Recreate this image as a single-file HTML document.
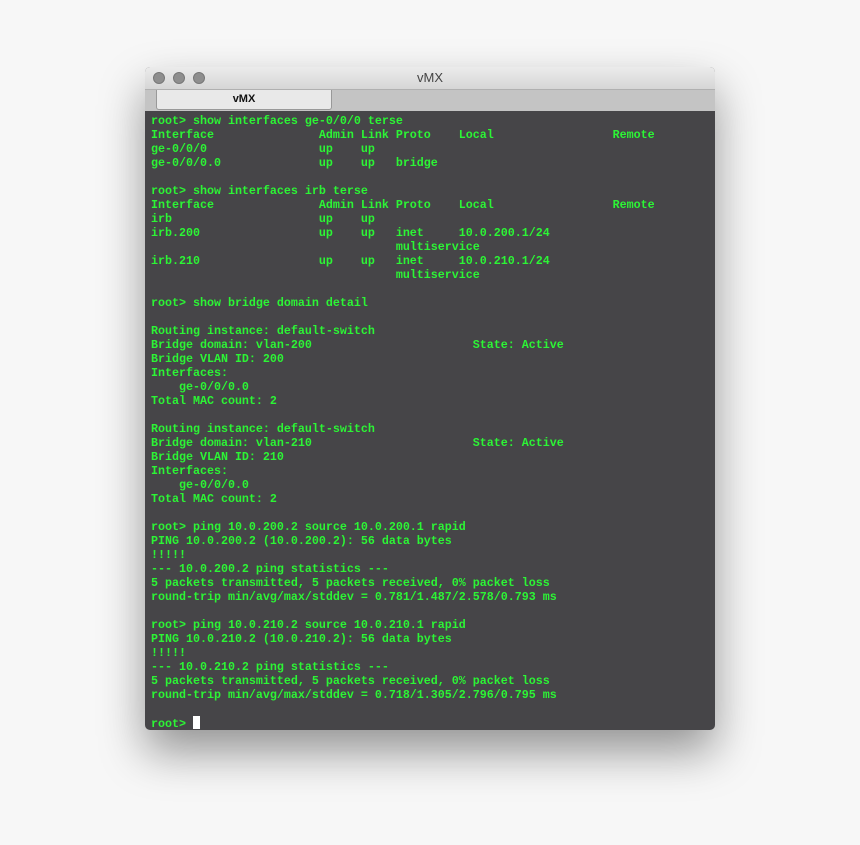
<!DOCTYPE html><html><head><style>
body{margin:0;width:860px;height:845px;background:#f7f7f7;position:relative;overflow:hidden}
.win{position:absolute;left:145px;top:67px;width:570px;height:663px;border-radius:5px;background:#464548;box-shadow:0 22px 45px rgba(0,0,0,.4);overflow:hidden}
.title{position:absolute;left:0;top:0;width:570px;height:22px;background:linear-gradient(#ececec,#d6d6d6);text-align:center;font:13px "Liberation Sans",sans-serif;color:#444;line-height:22px}
.dot{position:absolute;top:5px;width:12px;height:12px;border-radius:50%;background:#8e8e8e;border:0.5px solid #777;box-sizing:border-box}
.tabs{position:absolute;left:0;top:22px;width:570px;height:21px;background:#c4c4c4;border-top:1px solid #b0b0b0}
.tab{position:absolute;left:11px;top:0;width:174px;height:19px;background:#e9e9e9;border:1px solid #999;border-top:none;border-radius:0 0 3px 3px;text-align:center;font:bold 11px "Liberation Sans",sans-serif;line-height:19px;color:#111}
pre{position:absolute;left:6px;top:47px;margin:0;font:bold 11.67px/14px "Liberation Mono",monospace;color:#2cf535}
.cur{display:inline-block;width:7px;height:13px;background:#fff;vertical-align:-2px}
</style></head><body>
<div class="win">
<div class="title">vMX<span class="dot" style="left:8px"></span><span class="dot" style="left:28px"></span><span class="dot" style="left:48px"></span></div>
<div class="tabs"><div class="tab">vMX</div></div>
<pre>root&gt; show interfaces ge-0/0/0 terse
Interface               Admin Link Proto    Local                 Remote
ge-0/0/0                up    up
ge-0/0/0.0              up    up   bridge

root&gt; show interfaces irb terse
Interface               Admin Link Proto    Local                 Remote
irb                     up    up
irb.200                 up    up   inet     10.0.200.1/24
                                   multiservice
irb.210                 up    up   inet     10.0.210.1/24
                                   multiservice

root&gt; show bridge domain detail

Routing instance: default-switch
Bridge domain: vlan-200                       State: Active
Bridge VLAN ID: 200
Interfaces:
    ge-0/0/0.0
Total MAC count: 2

Routing instance: default-switch
Bridge domain: vlan-210                       State: Active
Bridge VLAN ID: 210
Interfaces:
    ge-0/0/0.0
Total MAC count: 2

root&gt; ping 10.0.200.2 source 10.0.200.1 rapid
PING 10.0.200.2 (10.0.200.2): 56 data bytes
!!!!!
--- 10.0.200.2 ping statistics ---
5 packets transmitted, 5 packets received, 0% packet loss
round-trip min/avg/max/stddev = 0.781/1.487/2.578/0.793 ms

root&gt; ping 10.0.210.2 source 10.0.210.1 rapid
PING 10.0.210.2 (10.0.210.2): 56 data bytes
!!!!!
--- 10.0.210.2 ping statistics ---
5 packets transmitted, 5 packets received, 0% packet loss
round-trip min/avg/max/stddev = 0.718/1.305/2.796/0.795 ms

root&gt; <span class="cur"></span></pre>
</div>
</body></html>
